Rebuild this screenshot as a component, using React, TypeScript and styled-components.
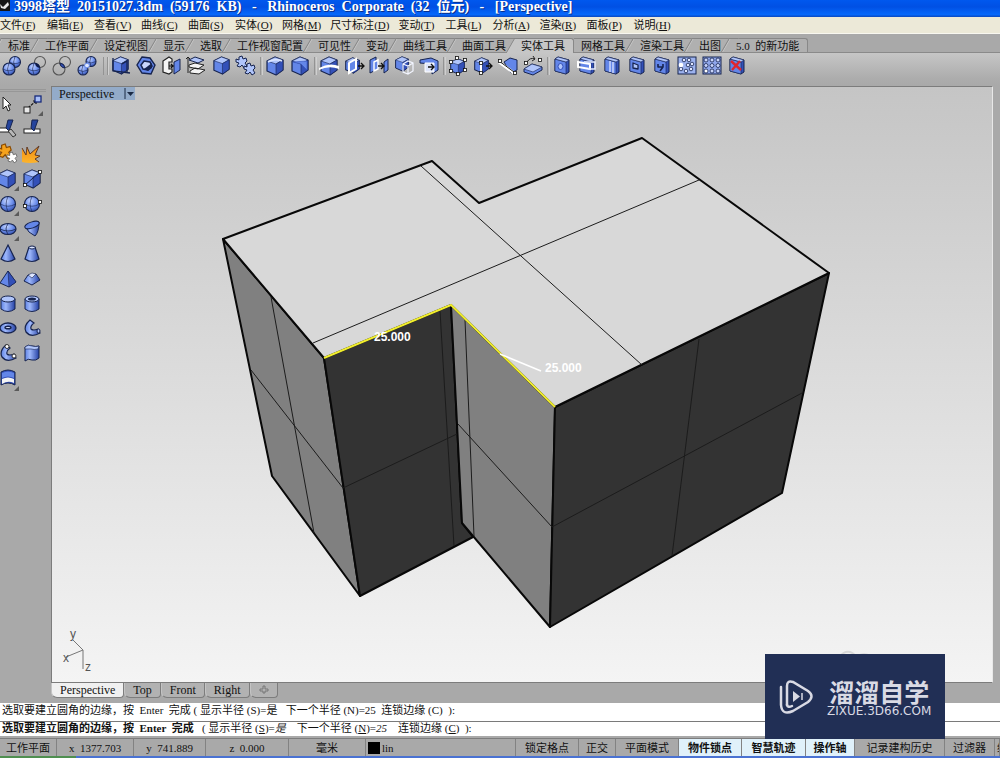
import React from "react";
import styled, { createGlobalStyle, css } from "styled-components";

const GlobalStyle = createGlobalStyle`
  *, *::before, *::after { box-sizing: border-box; }
  body { margin: 0; background: #a9a9a9; overflow: hidden; }
  button, input {
    font: inherit; color: inherit; background: none; border: 0;
    padding: 0; margin: 0; border-radius: 0; outline: none;
  }
`;

const Shell = styled.div`
  position: relative;
  display: flex;
  flex-direction: column;
  min-height: 100vh;
  overflow: hidden;
  background: #a9a9a9;
  color: #111;
  font: 11px/14px "Liberation Serif", "Noto Sans CJK SC", serif;
  white-space: pre;
`;

const TitleBar = styled.header`
  display: flex;
  align-items: flex-start;
  gap: 4px;
  height: 17px;
  overflow: hidden;
  background: linear-gradient(#0058ee, #0050e4 40%, #0668fb 85%, #0a48c0);
  color: #fff;
`;

const TitleText = styled.h1`
  margin: 0;
  font-size: 14px;
  line-height: 13px;
  font-weight: bold;
  text-shadow: 1px 1px 0 #0a2f8c;
`;

const MenuBar = styled.nav`
  display: flex;
  height: 17px;
  background: #ece9d8;
  border-bottom: 1px solid #f8f7f0;
`;

const MenuItem = styled.button`
  flex: none;
  min-width: 47px;
  padding-right: 9px;
  text-align: left;
  line-height: 16px;
`;

const TabStrip = styled.div`
  display: flex;
  height: 19px;
  padding: 4px 0 0 1px;
  border-bottom: 1px solid #8a8a8a;
`;

const ToolTab = styled.button<{ $active?: boolean; $flat?: boolean }>`
  position: relative;
  flex: none;
  height: 14px;
  padding: 0 8px 0 7px;
  line-height: 12px;
  border: 1px solid #888;
  border-width: 1px 0 0 0;
  background: #b0b0b0;
  ${p => !p.$flat && css`
    &::before {
      content: "";
      position: absolute;
      top: -1px;
      left: -4px;
      width: 10px;
      height: 14px;
      background: inherit;
      border: 1px solid #858585;
      border-width: 1px 0 0 1px;
      box-shadow: inset 1px 0 0 #c9c9c9;
      transform: skewX(-30deg);
    }
  `}
  ${p => p.$active && css`
    z-index: 1;
    height: 15px;
    background: #c6c6c6;
    border-width: 1px 1px 0 0;
    border-radius: 0 3px 0 0;
    &::before { height: 15px; }
  `}
  &:last-child { border-width: 1px 1px 0 0; border-radius: 0 3px 0 0; }
  & > span { position: relative; }
`;

const ToolBar = styled.div`
  display: flex;
  align-items: flex-start;
  height: 33px;
  padding: 3px 0 0 2px;
  background: linear-gradient(#c6c6c6, #acacac 26px, #a9a9a9);
`;

const ToolGroup = styled.div`
  display: flex;
  gap: 5px;
`;

const Separator = styled.i<{ $double?: boolean }>`
  flex: none;
  width: ${p => (p.$double ? 5 : 2)}px;
  height: 18px;
  margin: 1px 3px 0 ${p => (p.$double ? 6 : 4)}px;
  border: solid #939393;
  border-width: 0 ${p => (p.$double ? 1 : 0)}px 0 1px;
  box-shadow: 1px 0 0 #cfcfcf;
`;

const IconButton = styled.button<{ $flyout?: boolean }>`
  position: relative;
  flex: none;
  width: 20px;
  height: 20px;
  svg { display: block; overflow: visible; }
  ${p => p.$flyout && css`
    &::after {
      content: "";
      position: absolute;
      right: -1px;
      bottom: -2px;
      border-left: 5px solid transparent;
      border-bottom: 5px solid #5a5a5a;
    }
  `}
`;

const Body = styled.main`
  display: flex;
  flex: 1;
  min-height: 0;
`;

const SideBar = styled.aside`
  flex: none;
  width: 51px;
  padding-top: 3px;
  overflow: hidden;
`;

const SideRule = styled.div`
  height: 3px;
  margin-right: 5px;
  border: 1px solid #979797;
  border-width: 1px 0;
`;

const SideGrid = styled.div`
  display: grid;
  grid-template-columns: 24px 24px;
  grid-auto-rows: 25px;
  padding-top: 2px;
  margin-left: -2px;
`;

const Stage = styled.section`
  display: flex;
  flex: 1;
  flex-direction: column;
  min-width: 0;
  margin-right: 7px;
`;

const Viewport = styled.div`
  position: relative;
  flex: 1;
  min-height: 0;
  border: 1px solid #7c7c7c;
  border-right-color: #e8e8e8;
  background: linear-gradient(#c5c5c5, #f4f4f4);
`;

const Scene = styled.svg`
  position: absolute;
  inset: 0;
  width: 100%;
  height: 100%;
`;

const ViewTitle = styled.button`
  position: relative;
  display: flex;
  align-items: center;
  height: 13px;
  padding-left: 7px;
  background: #93abc9;
  font-size: 12px;
  line-height: 12px;
  svg { margin-left: 10px; }
`;

const ViewTabs = styled.div`
  display: flex;
  height: 20px;
`;

const ViewTab = styled.button<{ $active?: boolean }>`
  height: 15px;
  padding: 0 8px;
  line-height: 13px;
  font-size: 12px;
  border: 1px solid #7d7d7d;
  border-top: 0;
  border-left-color: #c4c4c4;
  border-radius: 0 0 4px 6px;
  background: ${p => (p.$active ? "#f0f0f0" : "#b2b2b2")};
`;

const History = styled.div`
  height: 19px;
  padding: 0 2px;
  background: #fff;
  border-bottom: 1px solid #7a7a7a;
`;

const Prompt = styled.form`
  display: flex;
  height: 14px;
  padding-left: 2px;
  background: #fff;
  line-height: 13px;
  label { font-weight: bold; }
  input { flex: 1; min-width: 0; }
`;

const StatusBar = styled.footer`
  display: flex;
  height: 18px;
  margin-top: 2px;
  border-top: 1px solid #7d7d7d;
  overflow: hidden;
`;

const StatusCell = styled.button<{ $w: number; $on?: boolean; $start?: boolean }>`
  display: flex;
  align-items: center;
  flex: none;
  width: ${p => p.$w}px;
  justify-content: ${p => (p.$start ? "flex-start" : "center")};
  padding: ${p => (p.$start ? "0 0 0 2px" : "0")};
  border-right: 1px solid #828282;
  overflow: hidden;
  ${p => p.$on && css`background: #e0f1fa; font-weight: bold;`}
`;

const LayerCell = styled(StatusCell)`
  flex: 1;
  min-width: 60px;
`;

const Swatch = styled.i`
  width: 12px;
  height: 12px;
  margin-right: 2px;
  background: #000;
`;

const TaskEdge = styled.div`
  height: 2px;
  background: linear-gradient(90deg, #4f8f50 76px, #4a72d2 76px);
`;

const Watermark = styled.div`
  position: absolute;
  right: 55px;
  bottom: 19px;
  display: flex;
  align-items: center;
  gap: 13px;
  width: 180px;
  height: 85px;
  padding-left: 14px;
  background: #212f55;
  color: #d9dae4;
`;

const BrandName = styled.div`
  font: bold 25px/28px "Noto Sans CJK SC", sans-serif;
  text-align: center;
`;

const BrandUrl = styled.div`
  font: 12px/12px "DejaVu Sans", sans-serif;
  text-align: center;
`;

/* ---------- icon primitives ---------- */

const INK = "#17244f";
const MID = "#6386e8";
const LITE = "#b0c5fb";
const DEEP = "#3350b8";

const Cube = ({ x = 0, y = 0, s = 1 }: { x?: number; y?: number; s?: number }) => (
  <g transform={`translate(${x} ${y}) scale(${s})`} stroke={INK} strokeWidth={1.2} strokeLinejoin="round">
    <path d="M2 5L10 1L18 4V14L11 19L2 15Z" fill={MID} />
    <path d="M2 5L10 1L18 4L11 8Z" fill={LITE} strokeWidth={0.6} />
    <path d="M11 8L18 4V14L11 19Z" fill={DEEP} strokeWidth={0.6} />
  </g>
);

const Ball = ({ cx, cy, r, ghost }: { cx: number; cy: number; r: number; ghost?: boolean }) => (
  <g stroke={ghost ? "#555" : INK} fill="none" strokeWidth={1.1}>
    <circle cx={cx} cy={cy} r={r} fill={ghost ? "none" : "url(#ball)"} />
    {!ghost && <path d={`M${cx - r} ${cy}Q${cx} ${cy + r * 0.6} ${cx + r} ${cy}M${cx} ${cy - r}Q${cx - r * 0.5} ${cy} ${cx} ${cy + r}`} strokeWidth={0.6} />}
  </g>
);

const Dot = ({ x, y }: { x: number; y: number }) => (
  <rect x={x - 1.5} y={y - 1.5} width={3} height={3} fill="#fff" stroke="#111" strokeWidth={0.8} />
);

const Slab = ({ children }: { children?: React.ReactNode }) => (
  <g stroke={INK} strokeLinejoin="round">
    <path d="M3 3L6 1L17 4V16L14 18L3 15Z" fill={DEEP} />
    <path d="M3 3L14 6V18L3 15Z" fill={MID} strokeWidth={0.6} />
    <path d="M3 3L6 1L17 4L14 6Z" fill={LITE} strokeWidth={0.6} />
    {children}
  </g>
);

const Arrow = ({ x, y }: { x: number; y: number }) => (
  <path d={`M${x - 6} ${y}H${x}M${x - 3} ${y - 3}L${x} ${y}L${x - 3} ${y + 3}`} stroke="#111" strokeWidth={1.3} fill="none" />
);

const PIECE = "M3 1L6 0L7 3L10 2L11 5L9 7L11 10L8 12L6 9L4 11L1 10L3 7L0 6L0 3L3 4Z";

const topIcons: [string, React.ReactNode][][] = [
  [
    ["布尔运算联集", <><Ball cx={13} cy={6} r={5.5} /><Ball cx={7} cy={13} r={6} /></>],
    ["布尔运算差集", <><Ball cx={13} cy={6} r={5.5} ghost /><Ball cx={7} cy={13} r={6} /><path d="M8 7a5.5 5.5 0 0 0 5 5a6 6 0 0 0-5-5" fill="#0e1a4a" /></>],
    ["布尔运算交集", <><Ball cx={13} cy={6} r={5.5} ghost /><Ball cx={7} cy={13} r={6} ghost /><path d="M8 7a5.5 5.5 0 0 0 5 5a6 6 0 0 0-5-5" fill={DEEP} stroke={INK} /></>],
    ["布尔运算分割", <><Ball cx={14} cy={5.5} r={5} /><Ball cx={6} cy={14} r={5} /><circle cx={10} cy={9.5} r={2.4} fill="#dfe8ff" stroke={MID} /></>],
  ],
  [
    ["抽离曲面", <><Cube s={0.95} /><path d="M2 2V15L19 17M11 8L16 5V16" fill="none" stroke={INK} strokeWidth={1.3} /></>],
    ["封闭的多重曲面薄壳", <><path d="M6 1L14 2L19 9L15 18L6 17L1 9Z" fill={MID} stroke={INK} strokeWidth={1.4} /><path d="M8 5L14 6L16 10L12 14L7 13L5 9Z" fill="#c9d6fb" stroke={INK} strokeWidth={1.6} /><path d="M8 13L16 7V12L12 15Z" fill={INK} /></>],
    ["将平面洞加盖", <><path d="M2 5L8 1L11 3V6H8V13H11V16L8 18L2 16Z" fill="#f4f4f4" stroke="#222" strokeWidth={1.2} /><path d="M13 6L19 3V14L13 18Z" fill={MID} stroke={INK} /><path d="M8 10H13M10 8L12 10L10 12" stroke="#111" fill="none" strokeWidth={1.2} /></>],
    ["挤出曲面", <><path d="M4 15L9 12L19 14L13 18L4 17ZM3 9L9 7L18 9L12 13L3 11Z" fill="#f3f3f3" stroke="#222" /><path d="M3 4L9 1L18 4L12 7Z" fill={LITE} stroke={INK} /><path d="M2 1V17M0 3L2 1L4 3" stroke="#222" fill="none" /></>],
    ["挤出", <Cube x={1} s={0.95} />],
    ["分割", <><path d={PIECE} fill={LITE} stroke={INK} /><path d={PIECE} transform="translate(8 7)" fill={LITE} stroke={INK} /></>],
  ],
  [
    ["不等距边缘圆角", <><Cube /><path d="M3 6Q10 2 17 5" stroke="#dce6ff" fill="none" strokeWidth={1.5} /></>],
    ["不等距边缘斜角", <><Cube /><path d="M3 6L11 8L17 14L17 5Z" fill={MID} stroke={DEEP} strokeWidth={0.6} /></>],
  ],
  [
    ["线切割", <><Cube /><path d="M0 12Q10 6 20 10L20 13Q10 9 0 14Z" fill="#fff" /></>],
    ["将面移动", <><Cube s={0.85} y={1} /><path d="M5 7L12 3V13L5 17Z" fill={MID} stroke="#fff" strokeWidth={2} /><Arrow x={20} y={10} /></>],
    ["移动边缘", <><path d="M1 4L7 1V14L1 17Z" fill={MID} stroke={INK} /><path d="M5 6L9 4V13L5 15Z" fill={MID} stroke="#fff" strokeWidth={1.4} /><path d="M15 6L19 3V14L15 17Z" fill={MID} stroke={INK} /><Arrow x={15} y={10} /></>],
    ["将面分割", <><Cube s={0.8} /><path d="M9 8L14 5L19 7V15L14 18L9 16ZM9 8L14 10L19 7M14 10V18" fill="none" stroke="#f2f5ff" strokeWidth={1.2} /></>],
    ["将面摺叠", <><path d="M1 4L12 2L19 5V14L13 18V8L1 7Z" fill={MID} stroke={INK} /><path d="M6 7H15V16H6Z" fill="#dfe6fb" stroke="#fff" /><Arrow x={15} y={11} /></>],
  ],
  [
    ["打开实体物件的控制点", <><Cube s={0.85} x={1} y={2} /><Dot x={3} y={6} /><Dot x={9} y={2} /><Dot x={17} y={4} /><Dot x={3} y={15} /><Dot x={10} y={18} /><Dot x={17} y={14} /></>],
    ["移动实体边缘", <><Cube s={0.85} y={1} /><path d="M8 8V17" stroke="#fff" strokeWidth={2} /><Dot x={8} y={7} /><Dot x={8} y={17} /><Arrow x={19} y={10} /></>],
    ["旋转面", <><path d="M6 6L12 2L19 4V14L13 17Z" fill={MID} stroke={INK} /><path d="M1 6L16 17" stroke="#fff" strokeWidth={3} /><path d="M1 5L16 16" stroke="#222" /><Dot x={2} y={5} /><Dot x={17} y={17} /></>],
    ["将洞移动", <><path d="M1 13L9 8L19 11V14L10 19L1 16Z" fill={MID} stroke={INK} /><path d="M1 13L9 8L19 11L10 16Z" fill={LITE} stroke={INK} strokeWidth={0.6} /><path d="M4 6Q7 1 12 3M10 0L12 3L9 5" stroke="#222" fill="none" /><Dot x={3} y={7} /><Dot x={17} y={4} /></>],
  ],
  [
    ["建立圆洞", <Slab><ellipse cx={8.5} cy={10.5} rx={2.5} ry={3} fill={LITE} stroke={DEEP} /></Slab>],
    ["建立洞", <><Slab /><path d="M1 6L13 8V13L1 11Z" fill="none" stroke="#fff" strokeWidth={2} /><path d="M7 6H18V13H11" fill="none" stroke="#e8edff" strokeWidth={1.4} /></>],
    ["放置洞", <Slab><path d="M8 5V16M11 6V17" stroke="#e6ecff" strokeWidth={1.2} /></Slab>],
    ["旋转成洞", <Slab><path d="M6 7L11 9V13L6 12Z" fill={LITE} stroke={INK} strokeWidth={1.3} /></Slab>],
    ["将洞旋转", <Slab><path d="M6 8V11H11V8M11 11L8 15" fill="none" stroke={INK} strokeWidth={1.6} /></Slab>],
    ["环形阵列洞", <><rect x={1} y={1} width={18} height={17} fill="#9cb2ef" stroke={INK} />{[[7, 4], [12, 4], [15, 8], [14, 13], [9, 15], [4, 13], [11, 9]].map(([x, y]) => <circle key={`${x}-${y}`} cx={x} cy={y} r={1.8} fill="#dfe6ff" stroke={INK} strokeWidth={0.8} />)}<circle cx={4} cy={9} r={2.3} fill="#fff" /></>],
    ["以洞做阵列", <><rect x={1} y={1} width={18} height={17} fill="#8fa6ea" stroke={INK} />{[4, 10, 16].flatMap(x => [4, 9.5, 15].map(y => <circle key={`${x}-${y}`} cx={x} cy={y} r={2} fill={x === 4 && y === 15 ? "#fff" : "#c9d5fb"} stroke={INK} strokeWidth={0.8} />))}</>],
    ["将洞删除", <Slab><path d="M4 5L14 14M13 5L5 14" stroke="#e0262e" strokeWidth={2.4} /></Slab>],
  ],
];

const sideIcons: [string, boolean, React.ReactNode][] = [
  ["取消选取", false, <path d="M5 3V15L8 12L10 17L12 16L10 11H13Z" fill="#fff" stroke="#222" />],
  ["控制点", true, <><path d="M6 14L15 6M11 7H14V10" stroke="#111" fill="none" strokeDasharray="3 1" strokeWidth={1.2} /><rect x={2} y={13} width={6} height={6} fill="#e8e8e8" stroke="#222" /><rect x={13} y={2} width={6} height={6} fill="#a8bff8" stroke="#182b7c" strokeWidth={1.3} /></>],
  ["修剪", false, <><rect x={0} y={9} width={11} height={4} fill="#fff" stroke="#222" /><path d="M10 1L15 1L11 12L8 9Z" fill="#24439c" stroke={INK} /><path d="M10 12L13 10L18 16L15 18Z" fill="#b8b8b8" stroke="#333" /></>],
  ["分割", false, <><rect x={2} y={10} width={16} height={4} fill="#fff" stroke="#222" /><path d="M10 1H16L12 12L9 9Z" fill="#24439c" stroke={INK} /></>],
  ["组合", false, <><path d={PIECE} transform="scale(1.2)" fill="#f5a21c" stroke="#8a4a00" /><path d={PIECE} transform="translate(9 8) scale(0.9)" fill="#fff" stroke="#666" /></>],
  ["炸开", false, <><path d="M0 18V4L4 11L5 3L8 10L17 2L13 11L18 12L13 15L17 18Q8 20 0 18Z" fill="url(#flame)" /><path d="M0 4L4 11L5 3L8 10L17 2L13 11L18 12L13 15L17 18" fill="none" stroke="#5e3a28" strokeLinejoin="round" /></>],
  ["立方体", true, <Cube x={-1} />],
  ["立方体：对角线", false, <><Cube /><path d="M3 16L18 3" stroke={INK} /><Dot x={3} y={16} /><Dot x={18} y={3} /></>],
  ["球体", true, <Ball cx={10} cy={10} r={7.5} />],
  ["球体：直径", false, <><Ball cx={10} cy={10} r={7.5} /><Dot x={3} y={12} /><Dot x={18} y={8} /></>],
  ["椭圆体", true, <><ellipse cx={10} cy={10} rx={8} ry={5.5} fill="url(#ball)" stroke={INK} strokeWidth={1.2} /><path d="M2 10Q10 14 18 10M10 5Q6 10 10 15" fill="none" stroke={INK} strokeWidth={0.8} /></>],
  ["抛物面体", false, <><path d="M3 7Q6 14 13 17Q17 13 17 3Z" fill="url(#body)" stroke={INK} /><ellipse cx={10} cy={6} rx={7.5} ry={3} transform="rotate(-18 10 6)" fill={MID} stroke={INK} /></>],
  ["圆锥体", false, <path d="M10 1L17 15Q10 20 3 15Z" fill="url(#body)" stroke={INK} strokeWidth={1.2} />],
  ["平顶锥体", false, <><path d="M7 3L3 15Q10 20 17 15L13 3Z" fill="url(#body)" stroke={INK} strokeWidth={1.2} /><ellipse cx={10} cy={3.5} rx={3} ry={1.5} fill="#dde6ff" stroke={INK} /></>],
  ["金字塔", false, <><path d="M10 2L18 13L11 18L2 14Z" fill={MID} stroke={INK} /><path d="M10 2L18 13L11 18Z" fill={DEEP} stroke={INK} strokeWidth={0.6} /></>],
  ["平顶金字塔", false, <><path d="M6 6L2 12L10 16L18 11L14 5Z" fill="url(#body)" stroke={INK} /><path d="M6 6L10 4L14 5L10 9Z" fill="#dde6ff" stroke={INK} strokeWidth={0.6} /></>],
  ["圆柱体", false, <><path d="M3 5V15Q10 20 17 15V5Z" fill="url(#body)" stroke={INK} /><ellipse cx={10} cy={5} rx={7} ry={3} fill={LITE} stroke={INK} /></>],
  ["圆柱管", false, <><path d="M3 5V15Q10 20 17 15V5Z" fill="url(#body)" stroke={INK} /><ellipse cx={10} cy={5} rx={7} ry={3} fill={LITE} stroke={INK} /><ellipse cx={10} cy={5} rx={4} ry={1.5} fill={INK} /></>],
  ["环状体", false, <><ellipse cx={10} cy={9} rx={8} ry={5} fill="url(#body)" stroke={INK} strokeWidth={1.3} /><ellipse cx={10} cy={8.5} rx={3} ry={1.3} fill="#dde6ff" stroke={INK} strokeWidth={1.4} /></>],
  ["圆管：平头盖", false, <><path d="M8 1Q1 7 4 13Q9 19 18 14L16 10Q11 12 9 10Q8 7 12 4Z" fill="url(#body)" stroke={INK} strokeWidth={1.2} /><ellipse cx={16.5} cy={12} rx={1.5} ry={2} fill={LITE} stroke={INK} /></>],
  ["圆管：圆头盖", false, <><path d="M8 1Q1 7 4 13Q9 19 18 14L16 10Q11 12 9 10Q8 7 12 4Z" fill="url(#body)" stroke={INK} strokeWidth={1.2} /><circle cx={9} cy={2.5} r={2} fill="#fff" stroke="#333" /><circle cx={16} cy={12} r={2} fill="#fff" stroke="#333" /></>],
  ["挤出封闭的平面曲线", false, <><path d="M3 3Q6 0 10 2Q14 3 17 2V14Q14 17 10 16Q6 14 3 17Z" fill="url(#body)" stroke={INK} /><path d="M3 3Q6 0 10 2Q14 3 17 2L16 5Q12 6 9 5Q6 5 3 5Z" fill={LITE} stroke={INK} strokeWidth={0.6} /></>],
  ["挤出曲面", true, <><path d="M3 3Q10 -1 17 3V16Q10 12 3 16Z" fill={DEEP} stroke={INK} /><path d="M4 4Q10 1 16 4V9Q10 6 4 9Z" fill={MID} /><path d="M4 10Q10 7 16 10V14Q10 11 4 15Z" fill="#f3f3f3" /></>],
];

/* ---------- content ---------- */

const menus: [string, string][] = [
  ["文件", "F"], ["编辑", "E"], ["查看", "V"], ["曲线", "C"], ["曲面", "S"], ["实体", "O"], ["网格", "M"],
  ["尺寸标注", "D"], ["变动", "T"], ["工具", "L"], ["分析", "A"], ["渲染", "R"], ["面板", "P"], ["说明", "H"],
];

const toolTabs = ["标准", "工作平面", "设定视图", "显示", "选取", "工作视窗配置", "可见性", "变动", "曲线工具", "曲面工具", "实体工具", "网格工具", "渲染工具", "出图", "5.0  的新功能"];
const ACTIVE_TAB = "实体工具";

const Glyph = ({ children }: { children: React.ReactNode }) => (
  <svg width="20" height="20" viewBox="0 0 20 20" aria-hidden="true">{children}</svg>
);

const Model = () => (
  <Scene viewBox="52 87 940 595">
    <defs>
      <radialGradient id="ball" cx="0.4" cy="0.3" r="0.8">
        <stop offset="0" stopColor="#c3d3ff" />
        <stop offset="0.5" stopColor="#6e90ec" />
        <stop offset="1" stopColor="#24409f" />
      </radialGradient>
      <linearGradient id="body">
        <stop offset="0" stopColor="#5f83e4" />
        <stop offset="0.35" stopColor="#9db7fb" />
        <stop offset="1" stopColor="#2440a4" />
      </linearGradient>
      <linearGradient id="flame" x2="0" y2="1">
        <stop offset="0" stopColor="#f28a10" />
        <stop offset="1" stopColor="#fdb52c" />
      </linearGradient>
    </defs>
    <g stroke="#080808" strokeWidth="2" strokeLinejoin="round">
      <path d="M223 239L324 358L360 596L272 476Z" fill="#808080" />
      <path d="M324 358L451 305L462 523L473 537L360 596Z" fill="#333" />
      <path d="M451 305L555 407L550 627L462 523Z" fill="#808080" />
      <path d="M555 407L829 273L782 493L550 627Z" fill="#333" />
      <path d="M223 239L432 161L479 203L642 138L829 273L555 407L451 305L324 358Z" fill="#d8d8d8" />
    </g>
    <path
      d="M421 166L642 365M313 343L699 180M271 297L314 533M251 370L343 488L457 434M440 311L454 546M465 320L474 536M458 424L552 527L802 393M699 339L672 556"
      fill="none" stroke="#1c1c1c" strokeWidth="1"
    />
    <path d="M324 358L451 305L555 407" fill="none" stroke="#f1ee2e" strokeWidth="2" />
    <path d="M500 354L541 371" stroke="#fff" strokeWidth="1.5" />
    <g fill="#fff" fontFamily="Liberation Sans, sans-serif" fontWeight="bold" fontSize="12">
      <text x="374" y="341">25.000</text>
      <text x="545" y="372">25.000</text>
    </g>
    <path d="M73 640L83 650L66 657M83 650V669" fill="none" stroke="#777" />
    <g fill="#555" fontFamily="Liberation Sans, sans-serif" fontSize="12">
      <text x="70" y="638">y</text>
      <text x="63" y="662">x</text>
      <text x="85" y="671">z</text>
    </g>
    <path d="M841 656a8 8 0 0 1 14 0M858 656a8 5 0 0 1 12 0" fill="none" stroke="#d8d8d8" strokeWidth="2" />
  </Scene>
);

export default function App() {
  return (
    <Shell>
      <GlobalStyle />
      <TitleBar>
        <svg width="10" height="12" viewBox="0 0 10 12" aria-hidden="true">
          <rect width="10" height="11" fill="#161616" />
          <path d="M0 4L3 7L8 2L9 5L5 9L1 8Z" fill="#e8e8e8" />
        </svg>
        <TitleText>3998塔型  20151027.3dm  (59176  KB)   -   Rhinoceros  Corporate  (32  位元)   -   [Perspective]</TitleText>
      </TitleBar>
      <MenuBar>
        {menus.map(([name, key]) => (
          <MenuItem key={name}>{name}(<u>{key}</u>)</MenuItem>
        ))}
      </MenuBar>
      <TabStrip>
        {toolTabs.map((t, i) => (
          <ToolTab key={t} $active={t === ACTIVE_TAB} $flat={toolTabs[i - 1] === ACTIVE_TAB}><span>{t}</span></ToolTab>
        ))}
      </TabStrip>
      <ToolBar>
        {topIcons.map((group, i) => (
          <React.Fragment key={i}>
            {i > 0 && <Separator $double={i === 1} />}
            <ToolGroup>
              {group.map(([label, art]) => (
                <IconButton key={label} aria-label={label}><Glyph>{art}</Glyph></IconButton>
              ))}
            </ToolGroup>
          </React.Fragment>
        ))}
      </ToolBar>
      <Body>
        <SideBar>
          <SideRule />
          <SideGrid>
            {sideIcons.map(([label, flyout, art]) => (
              <IconButton key={label} aria-label={label} $flyout={flyout}><Glyph>{art}</Glyph></IconButton>
            ))}
          </SideGrid>
        </SideBar>
        <Stage>
          <Viewport>
            <Model />
            <ViewTitle>
              Perspective
              <svg width="11" height="11" viewBox="0 0 11 11" aria-hidden="true">
                <path d="M1 0V11" stroke="#1b2a44" />
                <path d="M3 4H10L6.5 8Z" fill="#1b2a44" />
              </svg>
            </ViewTitle>
          </Viewport>
          <ViewTabs>
            <ViewTab $active>Perspective</ViewTab>
            <ViewTab>Top</ViewTab>
            <ViewTab>Front</ViewTab>
            <ViewTab>Right</ViewTab>
            <ViewTab aria-label="新增工作视窗">
              <svg width="10" height="9" viewBox="0 0 10 9" aria-hidden="true">
                <path d="M4 1H6V4H9V6H6V8H4V6H1V4H4Z" fill="none" stroke="#777" />
              </svg>
            </ViewTab>
          </ViewTabs>
        </Stage>
      </Body>
      <History>选取要建立圆角的边缘，按  Enter  完成 ( 显示半径 (S)=是   下一个半径 (N)=25  连锁边缘 (C)  ):</History>
      <Prompt>
        <label htmlFor="command">选取要建立圆角的边缘，按  Enter  完成</label>
        <span>   ( 显示半径 (<u>S</u>)=<i>是</i>    下一个半径 (<u>N</u>)=<i>25</i>    连锁边缘 (<u>C</u>)  ):</span>
        <input id="command" type="text" autoComplete="off" />
      </Prompt>
      <StatusBar>
        <StatusCell $w={57}>工作平面</StatusCell>
        <StatusCell $w={77}>x  1377.703</StatusCell>
        <StatusCell $w={72}>y  741.889</StatusCell>
        <StatusCell $w={83}>z  0.000</StatusCell>
        <StatusCell $w={77}>毫米</StatusCell>
        <LayerCell $w={152} $start><Swatch />lin</LayerCell>
        <StatusCell $w={63}>锁定格点</StatusCell>
        <StatusCell $w={37}>正交</StatusCell>
        <StatusCell $w={63}>平面模式</StatusCell>
        <StatusCell $w={63} $on>物件锁点</StatusCell>
        <StatusCell $w={64} $on>智慧轨迹</StatusCell>
        <StatusCell $w={49} $on>操作轴</StatusCell>
        <StatusCell $w={90}>记录建构历史</StatusCell>
        <StatusCell $w={50}>过滤器</StatusCell>
        <StatusCell $w={5} $start>绝</StatusCell>
      </StatusBar>
      <TaskEdge />
      <Watermark>
        <svg width="35" height="36" viewBox="0 0 35 36" fill="none" stroke="#d9dae4" aria-hidden="true">
          <path d="M8 26V7Q8 1 14 3L29 12Q36 17 29 23L14 32Q3 37 2 26V8" strokeWidth="2.5" strokeLinecap="round" />
          <path d="M8 26Q9 29 13 27" strokeWidth="2.5" strokeLinecap="round" />
          <path d="M14 12V23L21 17.5Z" fill="#d9dae4" stroke="none" />
          <path d="M23 14V21" strokeWidth="1.5" />
        </svg>
        <div>
          <BrandName>溜溜自学</BrandName>
          <BrandUrl>ZIXUE.3D66.COM</BrandUrl>
        </div>
      </Watermark>
    </Shell>
  );
}
